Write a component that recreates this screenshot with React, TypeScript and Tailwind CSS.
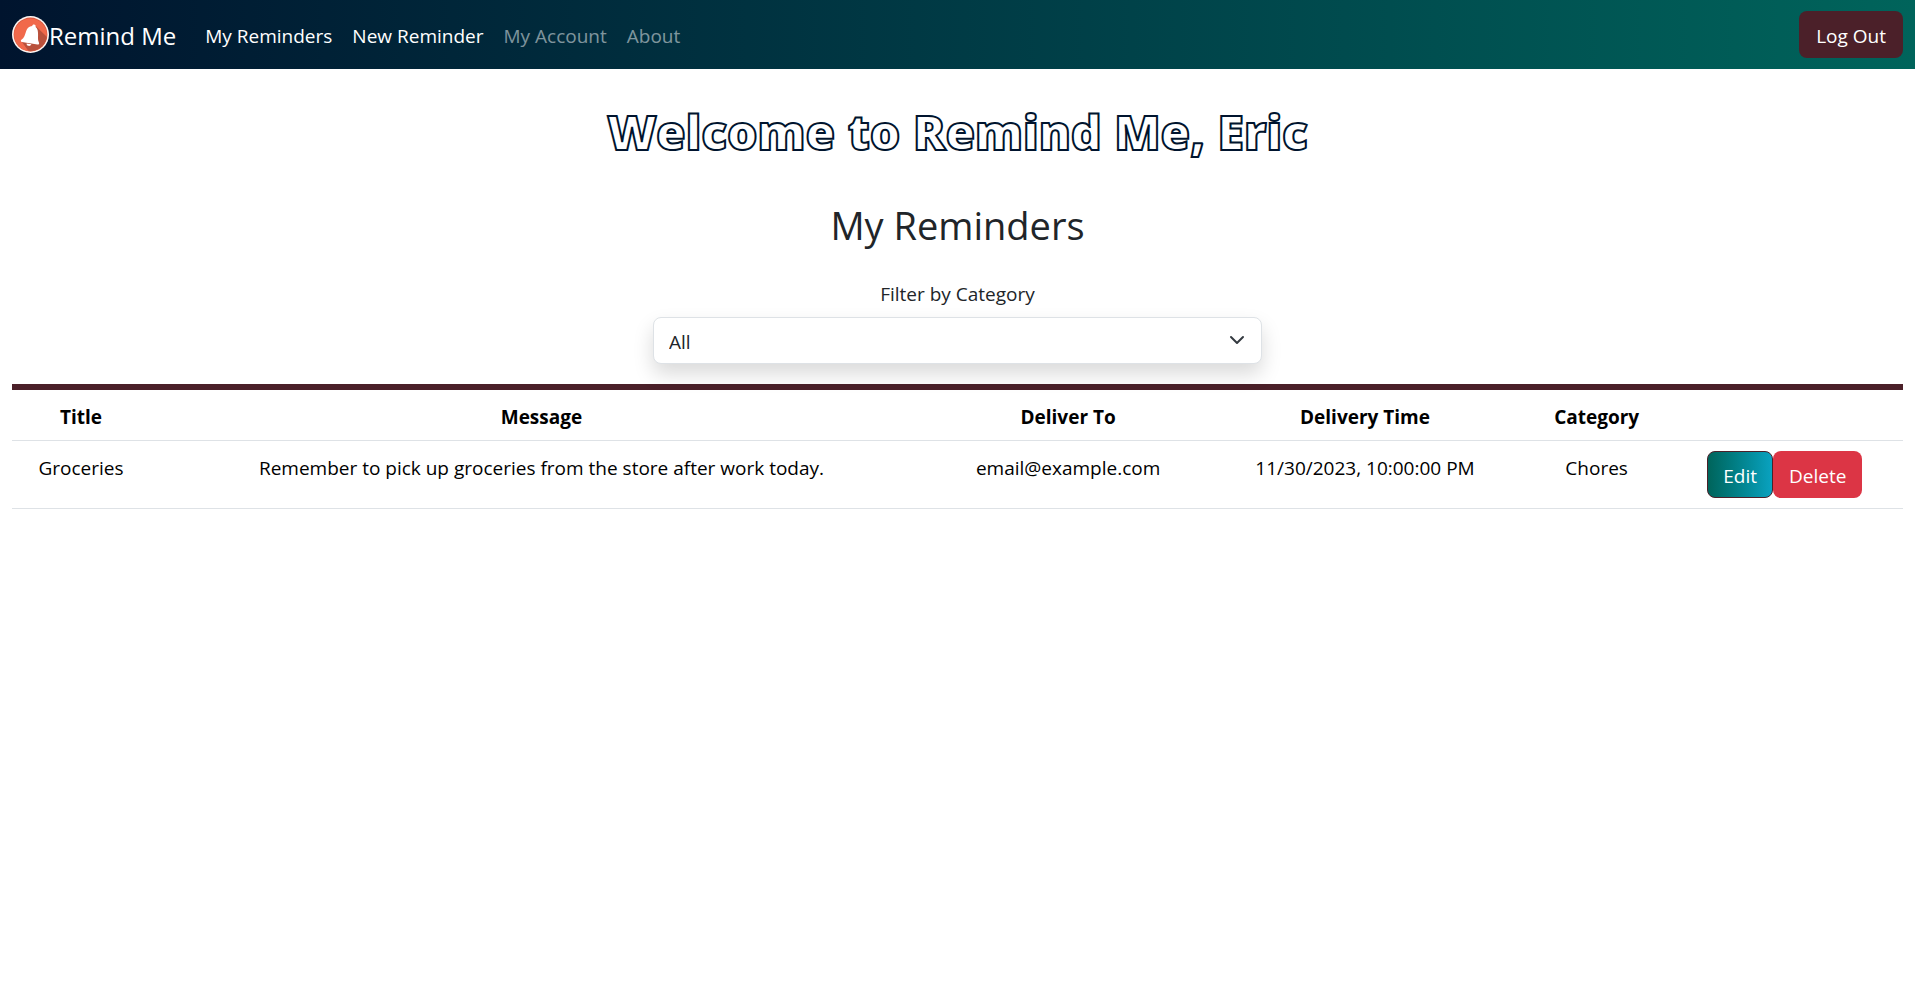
import { useState } from "react";

type Reminder = {
  title: string;
  message: string;
  deliverTo: string;
  deliveryTime: string;
  category: string;
};

const reminders: Reminder[] = [
  {
    title: "Groceries",
    message: "Remember to pick up groceries from the store after work today.",
    deliverTo: "email@example.com",
    deliveryTime: "11/30/2023, 10:00:00 PM",
    category: "Chores",
  },
];

const links = [
  { label: "My Reminders", active: true },
  { label: "New Reminder", active: true },
  { label: "My Account", active: false },
  { label: "About", active: false },
];

function BellLogo() {
  return (
    <svg viewBox="0 0 37 37" className="size-[37px] shrink-0" aria-hidden="true">
      <defs>
        <clipPath id="disc">
          <circle cx="18.5" cy="18.5" r="16.6" />
        </clipPath>
      </defs>
      <circle cx="18.5" cy="18.5" r="18.5" fill="#fdf6f3" />
      <circle cx="18.5" cy="18.5" r="16.9" fill="#d9573d" />
      <circle cx="18.5" cy="18.9" r="16.3" fill="#f1694b" />
      <path
        clipPath="url(#disc)"
        d="M23.2 9.6 L40 26 V40 H20 L9.6 25.4 L17 27 Z"
        fill="#b9513c"
      />
      <path
        d="M22.6 8.7 C21.3 8.3 20.3 9 20.1 10.1 C17.2 10.3 15.2 12.2 14.2 15 C12.9 18.9 12.3 21.9 9.4 23.7 C8.5 24.4 8.8 25.7 9.9 26 L25.4 28.6 C26.9 28.8 27.5 27.6 26.9 26.5 C25.4 23.5 26.3 20.6 26 16.7 C25.8 14 25.2 12.3 23.6 11.1 C24 10 23.6 9 22.6 8.7 Z"
        fill="#fff"
      />
      <path d="M14.6 27.5 L19.4 28.3 C18.8 29.8 17.4 30.2 16.2 29.8 C15.1 29.5 14.5 28.6 14.6 27.5 Z" fill="#fff" />
    </svg>
  );
}

function Navbar() {
  return (
    <nav className="flex h-[69px] items-center bg-linear-to-r from-[#00142e] to-[#00645b] px-3 text-white">
      <a href="#" className="mr-[29px] flex items-center">
        <BellLogo />
        <span className="pt-[2px] text-[24px] leading-9">Remind Me</span>
      </a>
      <ul className="flex grow items-center gap-5 pt-[2px]">
        {links.map((link) => (
          <li key={link.label}>
            <a href="#" className={link.active ? "text-white" : "text-white/50"}>
              {link.label}
            </a>
          </li>
        ))}
      </ul>
      <button type="button" className="h-[47px] rounded-lg bg-[#4b2029] px-[17px] pt-[2px] text-white">
        Log Out
      </button>
    </nav>
  );
}

function CategoryFilter() {
  const [category, setCategory] = useState("All");
  return (
    <div className="mx-auto flex w-[32.2%] flex-col items-center">
      <label htmlFor="category" className="mb-2">
        Filter by Category
      </label>
      <div className="relative w-full">
        <select
          id="category"
          value={category}
          onChange={(event) => setCategory(event.target.value)}
          className="h-[47px] w-full appearance-none rounded-lg border border-[#dee2e6] bg-white px-[15px] pt-[2px] shadow-[0_10px_20px_rgba(0,0,0,0.15)]"
        >
          <option>All</option>
          <option>Chores</option>
        </select>
        <svg
          viewBox="0 0 16 16"
          className="pointer-events-none absolute top-[15px] right-[17px] size-4"
          fill="none"
          stroke="#343a40"
          strokeWidth="2"
          strokeLinecap="round"
          strokeLinejoin="round"
          aria-hidden="true"
        >
          <path d="m2 5 6 6 6-6" />
        </svg>
      </div>
    </div>
  );
}

function ReminderTable() {
  return (
    <table className="w-full table-fixed border-collapse text-center text-black">
      <colgroup>
        <col className="w-[7.3%]" />
        <col className="w-[41.4%]" />
        <col className="w-[14.3%]" />
        <col className="w-[17.1%]" />
        <col className="w-[7.4%]" />
        <col className="w-[12.5%]" />
      </colgroup>
      <thead>
        <tr className="h-[50px] border-b border-[#dee2e6]">
          <th scope="col" className="pt-1">Title</th>
          <th scope="col" className="pt-1">Message</th>
          <th scope="col" className="pt-1">Deliver To</th>
          <th scope="col" className="pt-1">Delivery Time</th>
          <th scope="col" className="pt-1">Category</th>
          <td></td>
        </tr>
      </thead>
      <tbody>
        {reminders.map((reminder) => (
          <tr key={reminder.title} className="border-b border-[#dee2e6] align-top">
            <td className="py-3">{reminder.title}</td>
            <td className="py-3">{reminder.message}</td>
            <td className="py-3">{reminder.deliverTo}</td>
            <td className="py-3">{reminder.deliveryTime}</td>
            <td className="py-3">{reminder.category}</td>
            <td className="py-[10px]">
              <div className="flex justify-center text-white">
                <button
                  type="button"
                  className="h-[47px] rounded-lg border border-[#4b2029] bg-linear-to-r from-[#00645b] to-[#0aa2c0] px-[15px] pt-1"
                >
                  Edit
                </button>
                <button type="button" className="h-[47px] rounded-lg bg-[#dc3545] px-4 pt-1">
                  Delete
                </button>
              </div>
            </td>
          </tr>
        ))}
      </tbody>
    </table>
  );
}

export default function App() {
  return (
    <div className="min-h-screen bg-white font-['Open_Sans',sans-serif] text-[19px] leading-[30px] text-[#212529]">
      <Navbar />
      <main className="px-3">
        <h1 className="pt-[33px] text-center font-['Noto_Sans',sans-serif] text-[48px] leading-[60px] font-black text-white [-webkit-text-stroke:2px_#00142e]">
          Welcome to Remind Me, Eric
        </h1>
        <h2 className="mt-[39px] mb-[30px] text-center text-[38px] leading-[48px]">My Reminders</h2>
        <CategoryFilter />
        <div className="mt-5 border-t-[6px] border-[#4b2029]">
          <ReminderTable />
        </div>
      </main>
    </div>
  );
}
